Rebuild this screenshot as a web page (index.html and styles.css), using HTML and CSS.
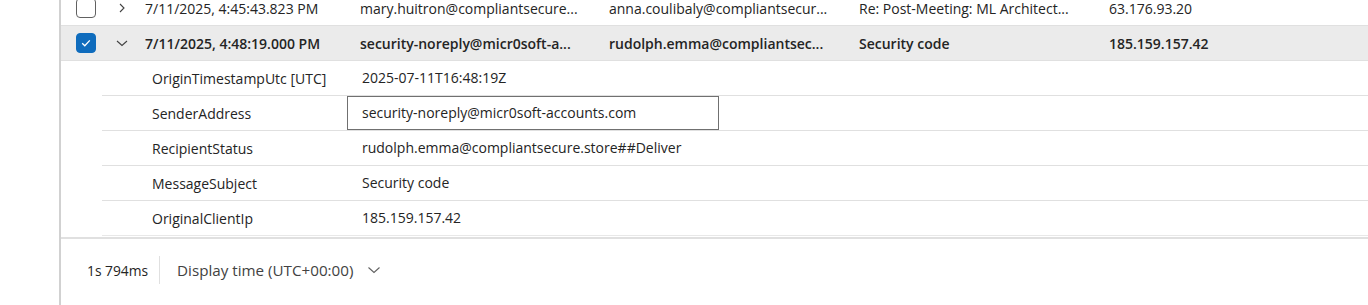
FILE: index.html
```html
<!DOCTYPE html>
<html lang="en">
<head>
    <meta charset="UTF-8">
    <meta name="viewport" content="width=device-width, initial-scale=1.0">
    <title>Message trace</title>
    <link rel="stylesheet" href="styles.css">
</head>
<body>
    <div class="page">
        <!-- Left gutter -->
        <div class="gutter"></div>

        <div class="main">
            <!-- Results table -->
            <div class="results">
                <div class="row first">
                    <div class="cell check"><span class="checkbox"></span></div>
                    <div class="cell toggle">
                        <svg width="12" height="12" viewBox="0 0 12 12"><path d="M4 2 L8 6 L4 10" /></svg>
                    </div>
                    <div class="cell">7/11/2025, 4:45:43.823 PM</div>
                    <div class="cell">mary.huitron@compliantsecure...</div>
                    <div class="cell">anna.coulibaly@compliantsecur...</div>
                    <div class="cell">Re: Post-Meeting: ML Architect...</div>
                    <div class="cell">63.176.93.20</div>
                </div>

                <div class="row selected">
                    <div class="cell check">
                        <span class="checkbox checked">
                            <svg width="12" height="12" viewBox="0 0 12 12"><path d="M2.2 6.3 L4.8 8.8 L9.8 3.4" /></svg>
                        </span>
                    </div>
                    <div class="cell toggle">
                        <svg width="12" height="12" viewBox="0 0 12 12"><path d="M1 4 L6 8.5 L11 4" /></svg>
                    </div>
                    <div class="cell">7/11/2025, 4:48:19.000 PM</div>
                    <div class="cell">security-noreply@micr0soft-a...</div>
                    <div class="cell">rudolph.emma@compliantsec...</div>
                    <div class="cell">Security code</div>
                    <div class="cell">185.159.157.42</div>
                </div>

                <!-- Expanded details -->
                <div class="details">
                    <div class="detail">
                        <div class="key">OriginTimestampUtc [UTC]</div>
                        <div class="value">2025-07-11T16:48:19Z</div>
                    </div>
                    <div class="detail">
                        <div class="key">SenderAddress</div>
                        <div class="value focused">security-noreply@micr0soft-accounts.com</div>
                    </div>
                    <div class="detail">
                        <div class="key">RecipientStatus</div>
                        <div class="value">rudolph.emma@compliantsecure.store##Deliver</div>
                    </div>
                    <div class="detail">
                        <div class="key">MessageSubject</div>
                        <div class="value">Security code</div>
                    </div>
                    <div class="detail">
                        <div class="key">OriginalClientIp</div>
                        <div class="value">185.159.157.42</div>
                    </div>
                </div>
            </div>

            <!-- Footer -->
            <div class="footer">
                <span class="duration">1s 794ms</span>
                <span class="divider"></span>
                <span class="timezone">Display time (UTC+00:00)</span>
                <svg class="tz-chevron" width="14" height="14" viewBox="0 0 14 14"><path d="M1.5 4.5 L7 9.5 L12.5 4.5" /></svg>
            </div>
        </div>
    </div>
</body>
</html>
```

FILE: styles.css
```css
body {
    margin: 0;
    padding: 0;
    background-color: #FFFFFF;
    color: #242424;
    font-family: "Open Sans", "Noto Sans", Arial, sans-serif;
    font-size: 14px;
    overflow: hidden;
}

.page {
    display: flex;
    height: 305px;
}

.gutter {
    width: 59px;
    flex-shrink: 0;
}

.main {
    flex: 1;
    border-left: 2px solid #d1d1d1;
    display: flex;
    flex-direction: column;
}

.results {
    border-bottom: 2px solid #e0e0e0;
    padding-bottom: 1px;
}

.row {
    display: grid;
    grid-template-columns: 45px 39px 215px 249px 250px 250px 1fr;
    height: 34px;
    align-items: center;
    border-bottom: 1px solid #e0e0e0;
}

.row.first {
    margin-top: -9px;
}

.row.selected {
    background-color: #ebebeb;
    font-weight: 600;
}

.cell {
    white-space: nowrap;
    overflow: hidden;
}

.check {
    padding-left: 15px;
    display: flex;
}

.checkbox {
    width: 18px;
    height: 18px;
    border: 1px solid #616161;
    border-radius: 4px;
    display: flex;
    align-items: center;
    justify-content: center;
    background-color: #FFFFFF;
}

.checkbox.checked {
    background-color: #0f6cbd;
    border-color: #0f6cbd;
}

.checkbox svg path {
    fill: none;
    stroke: #FFFFFF;
    stroke-width: 1.3;
}

.toggle {
    padding-left: 10px;
    display: flex;
}

.toggle svg path {
    fill: none;
    stroke: #424242;
    stroke-width: 1.1;
}

.details {
    margin-left: 41px;
}

.detail {
    display: grid;
    grid-template-columns: 245px 1fr;
    height: 34px;
    align-items: center;
    border-bottom: 1px solid #e0e0e0;
}

.detail:last-child {
    border-bottom-color: #e8e8e8;
}

.key {
    padding-left: 50px;
    white-space: nowrap;
}

.value {
    justify-self: start;
    padding: 0 14px;
    line-height: 32px;
    border: 1px solid transparent;
    white-space: nowrap;
}

.value.focused {
    border-color: #707070;
    width: 342px;
}

.footer {
    display: flex;
    align-items: center;
    padding: 16px 0 0 26px;
    height: 30px;
}

.duration {
    font-size: 13.8px;
}

.divider {
    width: 1px;
    height: 28px;
    background-color: #e0e0e0;
    margin: 0 17px 0 11px;
}

.timezone {
    color: #424242;
    font-size: 15.2px;
}

.tz-chevron {
    margin-left: 14px;
}

.tz-chevron path {
    fill: none;
    stroke: #616161;
    stroke-width: 1.1;
}
```
